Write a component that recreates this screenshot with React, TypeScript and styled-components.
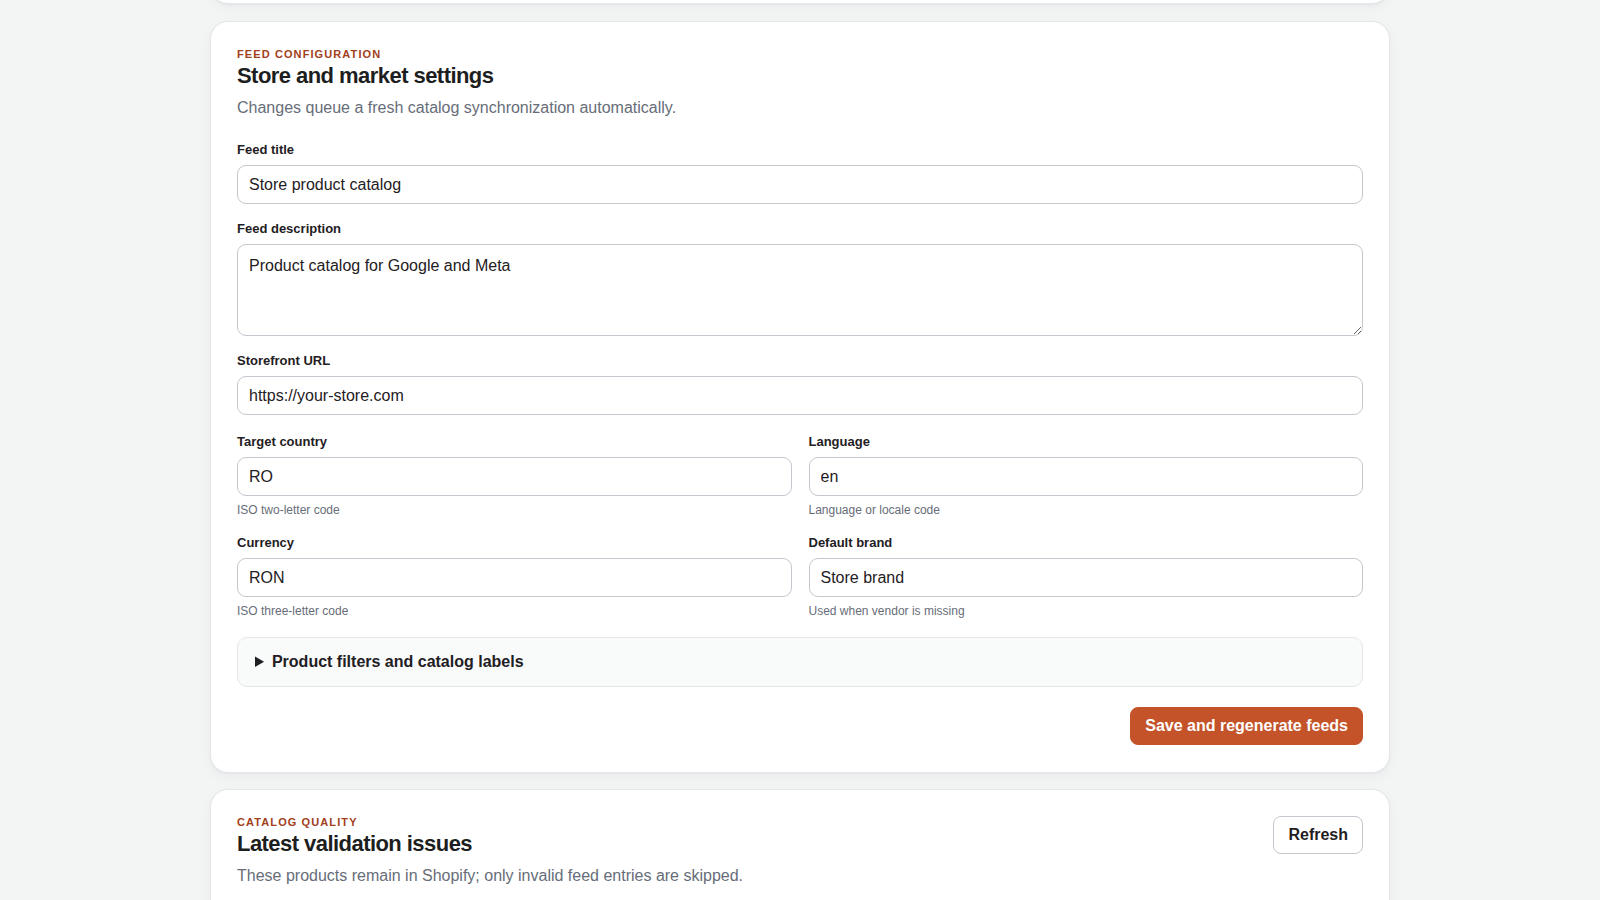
import React from "react";
import styled, {createGlobalStyle} from "styled-components";

const GlobalStyle = createGlobalStyle`
	html, body {
		margin: 0;
		padding: 0;
		height: 100%;
		overflow: hidden;
		background: #f3f4f4;
	}
	body {
		font-family: "Liberation Sans", Arial, sans-serif;
		color: #1f2023;
	}
	* {
		box-sizing: border-box;
	}
`;

export default function App() {
	return (
		<>
			<GlobalStyle />
			<Page>
				<Stack>
					<PrevCard />

					<Card>
						<Eyebrow>Feed configuration</Eyebrow>
						<Title>Store and market settings</Title>
						<Subtitle>Changes queue a fresh catalog synchronization automatically.</Subtitle>

						<Form onSubmit={(e) => e.preventDefault()}>
							<Field>
								<Label htmlFor="title">Feed title</Label>
								<Input id="title" defaultValue="Store product catalog" />
							</Field>

							<Field>
								<Label htmlFor="desc">Feed description</Label>
								<TextArea id="desc" defaultValue="Product catalog for Google and Meta" />
							</Field>

							<Field>
								<Label htmlFor="url">Storefront URL</Label>
								<Input id="url" defaultValue="https://your-store.com" />
							</Field>

							<Grid>
								<Field>
									<Label htmlFor="country">Target country</Label>
									<Input id="country" defaultValue="RO" />
									<Hint>ISO two-letter code</Hint>
								</Field>
								<Field>
									<Label htmlFor="lang">Language</Label>
									<Input id="lang" defaultValue="en" />
									<Hint>Language or locale code</Hint>
								</Field>
								<Field>
									<Label htmlFor="currency">Currency</Label>
									<Input id="currency" defaultValue="RON" />
									<Hint>ISO three-letter code</Hint>
								</Field>
								<Field>
									<Label htmlFor="brand">Default brand</Label>
									<Input id="brand" defaultValue="Store brand" />
									<Hint>Used when vendor is missing</Hint>
								</Field>
							</Grid>

							<Details>
								<summary>Product filters and catalog labels</summary>
							</Details>

							<Actions>
								<PrimaryButton type="submit">Save and regenerate feeds</PrimaryButton>
							</Actions>
						</Form>
					</Card>

					<Card>
						<CardHead>
							<div>
								<Eyebrow>Catalog quality</Eyebrow>
								<Title>Latest validation issues</Title>
								<Subtitle>These products remain in Shopify; only invalid feed entries are skipped.</Subtitle>
							</div>
							<SecondaryButton type="button">Refresh</SecondaryButton>
						</CardHead>
					</Card>
				</Stack>
			</Page>
		</>
	);
}

const Page = styled.main`
	height: 100vh;
	overflow: hidden;
`;

const Stack = styled.div`
	width: 1180px;
	margin: 0 auto;
	display: flex;
	flex-direction: column;
	gap: 16px;
`;

const Card = styled.section`
	background: #ffffff;
	border: 1px solid #e4e6e9;
	border-radius: 18px;
	padding: 26px 26px 27px;
	box-shadow: 0 1px 2px rgba(16, 24, 40, 0.04), 0 4px 14px rgba(16, 24, 40, 0.04);
`;

// the card above is scrolled out of view, only its bottom edge shows
const PrevCard = styled(Card)`
	height: 80px;
	margin-top: -76px;
	margin-bottom: 1px;
	flex-shrink: 0;
`;

const CardHead = styled.div`
	display: flex;
	justify-content: space-between;
	align-items: flex-start;
	gap: 24px;
	padding-bottom: 40px;
`;

const Eyebrow = styled.div`
	font-size: 11px;
	line-height: 13px;
	font-weight: 700;
	letter-spacing: 0.1em;
	text-transform: uppercase;
	color: #a2401b;
`;

const Title = styled.h2`
	margin: 2px 0 0;
	font-size: 22px;
	line-height: 26px;
	font-weight: 700;
	letter-spacing: -0.55px;
	color: #1d1e20;
`;

const Subtitle = styled.p`
	margin: 7px 0 0;
	font-size: 16px;
	line-height: 24px;
	color: #676d78;
`;

const Form = styled.form`
	margin-top: 21px;
	display: flex;
	flex-direction: column;
	gap: 16px;
`;

const Grid = styled.div`
	margin-top: 2px;
	display: grid;
	grid-template-columns: 1fr 1fr;
	column-gap: 17px;
	row-gap: 16px;
`;

const Field = styled.div`
	display: flex;
	flex-direction: column;
`;

const Label = styled.label`
	font-size: 13px;
	line-height: 18px;
	font-weight: 700;
	color: #1f2023;
	margin-bottom: 6px;
`;

const Input = styled.input`
	height: 39px;
	padding: 0 11px;
	font-family: inherit;
	font-size: 16px;
	color: #1f2023;
	background: #ffffff;
	border: 1px solid #c4c8ce;
	border-radius: 9px;
	outline: none;
`;

const TextArea = styled.textarea`
	height: 92px;
	padding: 10px 11px;
	font-family: inherit;
	font-size: 16px;
	line-height: 22px;
	color: #1f2023;
	background: #ffffff;
	border: 1px solid #c4c8ce;
	border-radius: 9px;
	outline: none;
	resize: vertical;
`;

const Hint = styled.span`
	margin-top: 6px;
	font-size: 12px;
	line-height: 16px;
	color: #676d78;
`;

const Details = styled.details`
	margin-top: 2px;
	background: #f9fafa;
	border: 1px solid #e3e6ea;
	border-radius: 10px;
	padding: 15px 17px;

	summary {
		font-size: 16px;
		line-height: 18px;
		font-weight: 700;
		color: #1f2023;
		cursor: pointer;
	}
`;

const Actions = styled.div`
	margin-top: 4px;
	display: flex;
	justify-content: flex-end;
`;

const ButtonBase = styled.button`
	font-family: inherit;
	font-size: 16px;
	line-height: 18px;
	font-weight: 700;
	padding: 9px 14px;
	border-radius: 8px;
	cursor: pointer;
`;

const PrimaryButton = styled(ButtonBase)`
	background: #c4532a;
	border: 1px solid #c4532a;
	color: #ffffff;
`;

const SecondaryButton = styled(ButtonBase)`
	background: #ffffff;
	border: 1px solid #c4c8ce;
	color: #1f2023;
`;
